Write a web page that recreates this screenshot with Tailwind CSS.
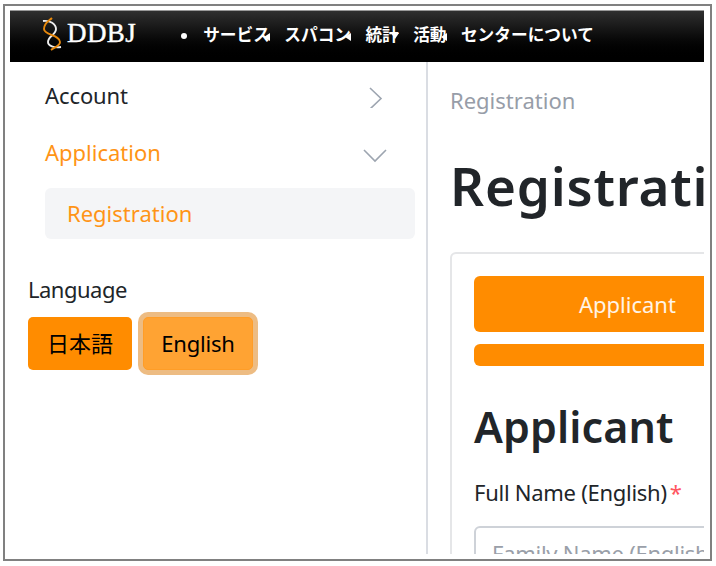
<!DOCTYPE html>
<html lang="ja">
<head>
<meta charset="utf-8">
<title>DDBJ</title>
<script src="https://cdn.jsdelivr.net/npm/@tailwindcss/browser@4"></script>
</head>
<body class="bg-white w-[716px] h-[566px] overflow-hidden pl-[3px] pt-1 font-['Noto_Sans','Noto_Sans_CJK_JP',sans-serif] text-[22px] text-[#212529]">
<div class="w-[709px] h-[557px] border-2 border-[#808080] pl-[5px] pt-1">
<div class="w-[694px] h-[544px] overflow-hidden flex flex-col">
  <header class="h-[52px] shrink-0 border-t border-[#999] bg-linear-to-b from-[#303030] to-black flex items-start text-white">
    <svg class="w-5 h-[34px] ml-8 mt-[6px] shrink-0" viewBox="0 0 20 34" fill="none" stroke-width="1.9">
      <path stroke="#eee" d="M1 4C8 3 14 7 14 12C14 18 6 19 6 25C6 29 12 31 19 30"/>
      <path stroke="#e8890c" d="M10 1C7 4 2 6 2 12C2 18 18 18 18 25C18 29 13 30 9 33"/>
    </svg>
    <span class="ml-[5px] mt-[4px] leading-[36px] text-[27px] tracking-[0.4px] font-['Liberation_Serif',serif] [-webkit-text-stroke:0.4px_white]">DDBJ</span>
    <nav class="flex text-[16.7px] font-bold leading-6 mt-[11px] font-['Noto_Sans_CJK_JP',sans-serif] whitespace-nowrap">
      <span class="w-[6px] h-[6px] rounded-full bg-white mt-[11px] ml-[45px] mr-4"></span>
      <span class="relative mr-[14.4px]">サービス<i class="absolute right-0 top-[11px] border-y-4 border-y-transparent border-r-[6px] border-r-white"></i></span>
      <span class="relative mr-[14.4px]">スパコン<i class="absolute right-0 top-[11px] border-y-4 border-y-transparent border-r-[6px] border-r-white"></i></span>
      <span class="relative mr-[14.4px]">統計<i class="absolute right-0 top-[11px] border-x-4 border-x-transparent border-t-[6px] border-t-white"></i></span>
      <span class="relative mr-[14.4px]">活動<i class="absolute right-0 top-[11px] border-y-4 border-y-transparent border-r-[6px] border-r-white"></i></span>
      <span>センターについて</span>
    </nav>
  </header>
  <div class="flex flex-1 min-h-0">
    <aside class="w-[418px] shrink-0 border-r-2 border-[#dadde3] pl-[18px] pr-[11px] pt-[5px]">
      <div class="pl-[17px]">
        <div class="h-[57px] flex items-center justify-between pr-7"><span class="tracking-[-0.1px]">Account</span>
          <svg class="w-6 h-6" viewBox="0 0 24 24" fill="none" stroke="#9da5b0" stroke-width="1.6"><path d="M7 4L18 14.5L7 25"/></svg></div>
        <div class="h-[57px] flex items-center justify-between pr-7 text-[#ff9416]"><span>Application</span>
          <svg class="w-6 h-6" viewBox="0 0 24 24" fill="none" stroke="#9da5b0" stroke-width="1.6"><path d="M1 9L12 20L23 9"/></svg></div>
        <div class="mt-[7px] h-[51px] bg-[#f4f5f7] rounded-md flex items-center pl-[22px] text-[#ff9416]"><span>Registration</span></div>
      </div>
      <div class="mt-[34px] h-[33px] leading-[32px] tracking-[-0.5px]">Language</div>
      <div class="flex gap-[11px] mt-[11px] text-black">
        <button class="w-[104px] h-[53px] bg-[#ff8c00] rounded-[5px]">日本語</button>
        <button class="w-[110px] h-[53px] bg-[#ffa333] border border-[#ff9d27] rounded-[5px] ring-[5px] ring-[#edbc83] tracking-[-0.2px]">English</button>
      </div>
    </aside>
    <main class="w-[360px] shrink-0 pl-[22px] pt-[22px]">
      <div class="h-[33px] leading-[33px] text-[#979da8]">Registration</div>
      <h1 class="mt-[36px] h-[68px] leading-[65px] text-[53px] tracking-[0.8px] font-semibold">Registration</h1>
      <div class="mt-[31px] border-2 border-[#e5e6e8] rounded-md h-[400px] w-[500px] pl-[22px] pt-[22px] ">
        <div class="h-14 bg-[#ff8c00] rounded-md text-white/90 pl-[105px] leading-[56px]">Applicant</div>
        <div class="h-[22px] mt-3 bg-[#ff8c00] rounded-md"></div>
        <h2 class="mt-[34px] h-[56px] leading-[54px] text-[43px] font-semibold tracking-[0.1px]">Applicant</h2>
        <div class="mt-[20px] h-[33px] leading-[32px]"><span class="tracking-[-0.27px]">Full Name (English)</span><span class="text-[#ff5560] ml-[3px]">*</span></div>
        <div class="mt-[17px] h-[60px] border-2 border-[#ced2d8] rounded-md pl-4 leading-[50px] text-[#9a9fa9] tracking-[-0.27px]">Family Name (English)</div>
      </div>
    </main>
  </div>
</div>
</div>
</body>
</html>
